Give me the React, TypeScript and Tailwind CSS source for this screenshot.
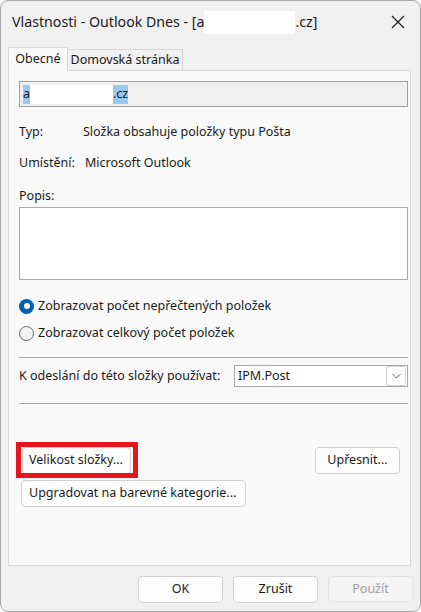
import React from "react";

const FONT = '"Noto Sans", "Open Sans", sans-serif';

function Btn({ children, className = "" }: { children: React.ReactNode; className?: string }) {
  return (
    <div
      className={
        "h-[27px] flex items-center bg-[#fdfdfd] border border-[#d0d0d0] rounded-[4px] text-[12.5px] text-[#1b1b1b] " +
        className
      }
    >
      {children}
    </div>
  );
}

export default function App() {
  return (
    <div className="w-[421px] h-[612px] relative" style={{ fontFamily: FONT }}>
      <div className="absolute inset-0 bg-[#f0f0f0] border border-[#a8a8a8] rounded-[8px] overflow-hidden flex flex-col">
        {/* title bar */}
        <div className="h-[42px] flex items-center justify-between pl-[11px] pr-[15px] shrink-0">
          <div className="flex items-center text-[14.2px] text-[#1a1a1a]">
            <span>Vlastnosti - Outlook Dnes - [a</span>
            <span className="inline-block w-[91px] h-[23px] bg-white" />
            <span>.cz]</span>
          </div>
          <svg width="14" height="14" viewBox="0 0 14 14" className="mb-[1px]">
            <path d="M1 1 L13 13 M13 1 L1 13" stroke="#1a1a1a" strokeWidth="1.1" />
          </svg>
        </div>

        {/* tabs */}
        <div className="flex items-end pl-[7px] h-[23px] mt-[4px] shrink-0 relative z-10">
          <div className="h-[24px] w-[60px] bg-[#f9f9f9] border border-[#d9d9d9] border-b-0 flex items-start pt-[2px] justify-center text-[12.5px] text-[#1a1a1a] mb-[-1px]">
            Obecné
          </div>
          <div className="h-[21px] w-[115px] bg-[#f0f0f0] border border-[#d9d9d9] border-l-0 border-b-0 flex items-center justify-center text-[12.5px] text-[#1a1a1a]">
            Domovská stránka
          </div>
        </div>

        {/* panel */}
        <div className="mx-[7px] w-[403px] h-[496px] bg-[#f9f9f9] border border-[#d9d9d9] flex flex-col pl-[10px] pr-[2px] text-[12.5px] text-[#1a1a1a] shrink-0">
          <div className="mt-[10px] h-[26px] bg-[#f0f0f0] border border-[#a0a0a0] flex items-center pl-[3px]">
            <div className="flex items-center h-[19px] bg-[#99c9ef]">
              <span>a</span>
              <span className="inline-block w-[83px] h-[19px] bg-white" />
              <span>.cz</span>
            </div>
          </div>

          <div className="mt-[15px] h-[20px] flex items-center">
            <span className="w-[64px]">Typ:</span>
            <span>Složka obsahuje položky typu Pošta</span>
          </div>
          <div className="mt-[11px] h-[20px] flex items-center">
            <span className="w-[66px]">Umístění:</span>
            <span>Microsoft Outlook</span>
          </div>
          <div className="mt-[13px] h-[20px] flex items-center">Popis:</div>
          <div className="mt-[1px] h-[73px] bg-white border border-[#a9a9a9]" />

          <div className="mt-[16px] h-[20px] flex items-center gap-[4px]">
            <span className="w-[15px] h-[15px] rounded-full bg-[#005fb8] flex items-center justify-center">
              <span className="w-[6px] h-[6px] rounded-full bg-white" />
            </span>
            <span>Zobrazovat počet nepřečtených položek</span>
          </div>
          <div className="mt-[7px] h-[20px] flex items-center gap-[4px]">
            <span className="w-[15px] h-[15px] rounded-full bg-[#f3f3f3] border border-[#6a6a6a]" />
            <span>Zobrazovat celkový počet položek</span>
          </div>

          <div className="mt-[14px] h-[1px] bg-[#a8a8a8]" />

          <div className="mt-[7px] h-[22px] flex items-center justify-between">
            <span>K odeslání do této složky používat:</span>
            <div className="w-[174px] h-[22px] bg-white border border-[#a9a9a9] flex items-center justify-between pl-[3px] pr-[1px]">
              <span>IPM.Post</span>
              <div className="w-[20px] h-[20px] border border-[#d4d4d4] rounded-[2px] flex items-center justify-center">
                <svg width="9" height="6" viewBox="0 0 9 6">
                  <path d="M0.5 1 L4.5 5 L8.5 1" stroke="#606060" strokeWidth="1" fill="none" />
                </svg>
              </div>
            </div>
          </div>

          <div className="mt-[16px] h-[1px] bg-[#a8a8a8]" />

          <div className="mt-[43px] flex items-center justify-between pr-[8px]">
            <div className="relative ml-[3px]">
              <Btn className="w-[109px] pl-[6px]">Velikost složky...</Btn>
              <div className="absolute left-[-6px] top-[-5px] right-[-7px] bottom-[-4px] border-[5px] border-[#e8141c]" />
            </div>
            <Btn className="w-[85px] justify-center">Upřesnit...</Btn>
          </div>
          <div className="mt-[6px] ml-[2px]">
            <Btn className="w-[225px] pl-[7px]">Upgradovat na barevné kategorie...</Btn>
          </div>
        </div>

        {/* footer */}
        <div className="flex justify-end gap-[10px] pr-[7px] mt-[10px]">
          <Btn className="w-[85px] h-[26px] justify-center border-[#005fb8]">OK</Btn>
          <Btn className="w-[85px] h-[26px] justify-center">Zrušit</Btn>
          <div className="w-[85px] h-[26px] flex items-center justify-center bg-[#f5f5f5] border border-[#e5e5e5] rounded-[4px] text-[12.5px] text-[#a0a0a0]">
            Použít
          </div>
        </div>
      </div>
    </div>
  );
}
